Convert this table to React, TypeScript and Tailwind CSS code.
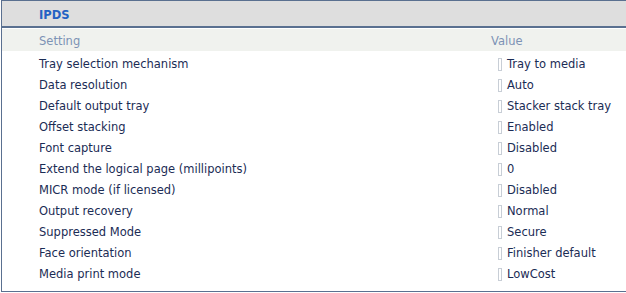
const rows: [string, string][] = [
  ["Tray selection mechanism", "Tray to media"],
  ["Data resolution", "Auto"],
  ["Default output tray", "Stacker stack tray"],
  ["Offset stacking", "Enabled"],
  ["Font capture", "Disabled"],
  ["Extend the logical page (millipoints)", "0"],
  ["MICR mode (if licensed)", "Disabled"],
  ["Output recovery", "Normal"],
  ["Suppressed Mode", "Secure"],
  ["Face orientation", "Finisher default"],
  ["Media print mode", "LowCost"],
];

export default function App() {
  return (
    <div
      className="w-[626px] h-[293px] bg-white text-[11.5px] leading-none"
      style={{ fontFamily: '"DejaVu Sans", Verdana, sans-serif' }}
    >
      <div className="ml-px h-[292px] border-t border-l border-b border-[#5a7090] flex flex-col">
        {/* section title */}
        <div className="h-[27px] bg-[#dedede] border-b-2 border-[#5a7090] flex items-center pl-[37px] pt-[5px]">
          <span className="font-bold text-[#2462c4]">IPDS</span>
        </div>

        {/* column headings */}
        <div className="mt-px h-[22px] bg-[#f0f2ee] flex items-center text-[#7d93b5] pt-[4px]">
          <span className="pl-[37px] w-[489px]">Setting</span>
          <span>Value</span>
        </div>

        <div className="mt-[3px] flex flex-col">
          {rows.map(([name, value]) => (
            <div key={name} className="h-[21px] flex items-center text-[#1b2c55]">
              <span className="pl-[37px] w-[496px]">{name}</span>
              <span className="w-[4px] h-[13px] border border-[#c8ced6] mr-[5px]" />
              <span>{value}</span>
            </div>
          ))}
        </div>
      </div>
    </div>
  );
}
